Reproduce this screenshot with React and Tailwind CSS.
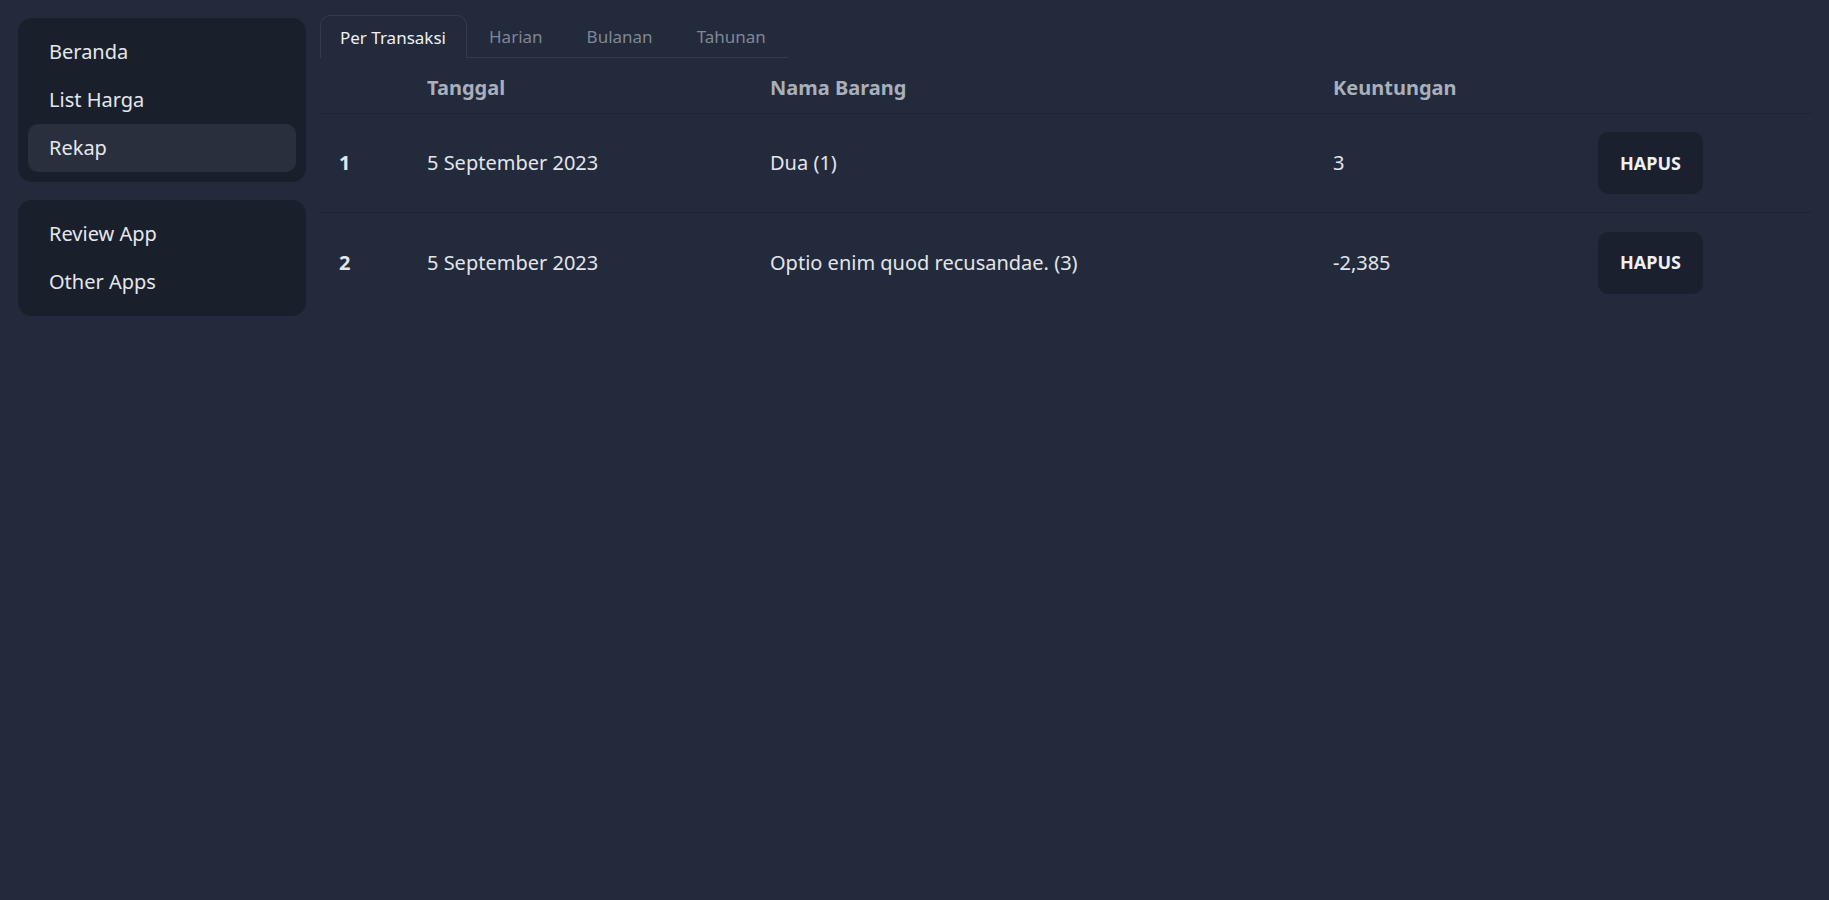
import React from "react";

const MENU_1 = [
  { label: "Beranda" },
  { label: "List Harga" },
  { label: "Rekap", active: true },
];
const MENU_2 = [{ label: "Review App" }, { label: "Other Apps" }];

const TABS = ["Per Transaksi", "Harian", "Bulanan", "Tahunan"];

const ROWS = [
  { no: 1, tanggal: "5 September 2023", nama: "Dua (1)", untung: "3" },
  { no: 2, tanggal: "5 September 2023", nama: "Optio enim quod recusandae. (3)", untung: "-2,385" },
];

function Menu({ items }) {
  return (
    <ul className="bg-[#1a1f2c] rounded-[14px] p-[10px] flex flex-col">
      {items.map((it) => (
        <li
          key={it.label}
          className={`h-[48px] flex items-center pl-[21px] rounded-[10px] text-[20px] text-[#e4e7ec] ${
            it.active ? "bg-[#2a2f3d]" : ""
          }`}
        >
          {it.label}
        </li>
      ))}
    </ul>
  );
}

export default function App() {
  const cols = "grid grid-cols-[88px_343px_563px_265px_1fr]";
  return (
    <div
      className="min-h-screen bg-[#232a3b] flex gap-[14px] pl-[18px] pr-[17px] pt-[15px]"
      style={{ fontFamily: "'Noto Sans', 'Open Sans', sans-serif" }}
    >
      <aside className="w-[288px] shrink-0 flex flex-col gap-[18px] pt-[3px]">
        <Menu items={MENU_1} />
        <Menu items={MENU_2} />
      </aside>

      <main className="flex-1 min-w-0">
        {/* tabs */}
        <div className="flex items-end h-[43px]">
          {TABS.map((t, i) =>
            i === 0 ? (
              <div
                key={t}
                className="h-full w-[147px] flex items-center pl-[19px] pt-[2px] border border-b-0 border-[#343b4b] rounded-t-[10px] text-[17px] text-[#eef0f4]"
              >
                {t}
              </div>
            ) : (
              <div
                key={t}
                className="h-full flex items-center pt-[2px] px-[22px] border-b border-[#343b4b] text-[17px] text-[#7f8797]"
              >
                {t}
              </div>
            )
          )}
        </div>

        {/* table */}
        <div className={`${cols} h-[56px] pt-[5px] items-center border-b border-[#1e2432] text-[20px] font-bold text-[#a9afbb]`}>
          <div className="pl-[19px]"></div>
          <div className="pl-[19px]">Tanggal</div>
          <div className="pl-[19px]">Nama Barang</div>
          <div className="pl-[19px]">Keuntungan</div>
          <div className="pl-[19px]"></div>
        </div>
        {ROWS.map((r, i) => (
          <div
            key={r.no}
            className={`${cols} h-[99px] items-center text-[20px] text-[#e2e5ea] ${
              i < ROWS.length - 1 ? "border-b border-[#1e2432]" : ""
            }`}
          >
            <div className="pl-[19px] font-bold">{r.no}</div>
            <div className="pl-[19px]">{r.tanggal}</div>
            <div className="pl-[19px]">{r.nama}</div>
            <div className="pl-[19px]">{r.untung}</div>
            <div className="pl-[19px]">
              <button className="w-[105px] h-[62px] rounded-[10px] bg-[#1b202e] text-[18px] font-bold text-[#eef0f4]">
                HAPUS
              </button>
            </div>
          </div>
        ))}
      </main>
    </div>
  );
}
